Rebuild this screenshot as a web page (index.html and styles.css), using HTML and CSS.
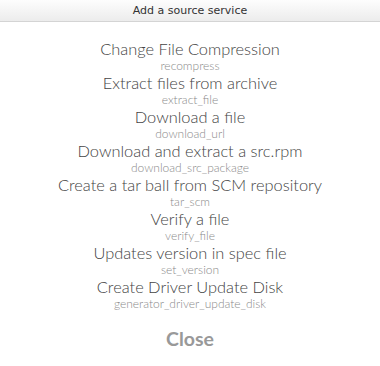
FILE: index.html
```html
<!DOCTYPE html>
<html>
<head>
<meta charset="utf-8">
<link rel="stylesheet" href="styles.css">
</head>
<body>
<div class="dialog">
  <div class="header">Add a source service</div>
  <ul class="services">
    <li><a class="title">Change File Compression</a><span class="name">recompress</span></li>
    <li><a class="title">Extract files from archive</a><span class="name">extract_file</span></li>
    <li><a class="title">Download a file</a><span class="name">download_url</span></li>
    <li><a class="title">Download and extract a src.rpm</a><span class="name">download_src_package</span></li>
    <li><a class="title">Create a tar ball from SCM repository</a><span class="name">tar_scm</span></li>
    <li><a class="title">Verify a file</a><span class="name">verify_file</span></li>
    <li><a class="title">Updates version in spec file</a><span class="name">set_version</span></li>
    <li><a class="title">Create Driver Update Disk</a><span class="name">generator_driver_update_disk</span></li>
  </ul>
  <div class="footer"><a class="close">Close</a></div>
</div>
</body>
</html>
```

FILE: styles.css
```css
html, body {
  margin: 0;
  padding: 0;
  background: #ffffff;
}
.dialog {
  width: 380px;
  height: 366px;
  box-sizing: border-box;
  font-family: "Lato", "Open Sans", sans-serif;
  background: #ffffff;
  border-radius: 0 0 4px 4px;
}
.header {
  height: 21px;
  line-height: 22px;
  border-bottom: 1px solid #d4d4d4;
  background: linear-gradient(#fdfdfd, #ececec);
  text-align: center;
  font-family: "DejaVu Sans", sans-serif;
  font-size: 11px;
  color: #333;
  letter-spacing: 0;
}
.services {
  list-style: none;
  margin: 0;
  padding: 17px 0 0;
  text-align: center;
}
.services li {
  display: flex;
  flex-direction: column;
  align-items: center;
  height: 34px;
}
.title {
  font-size: 16.4px;
  font-weight: 300;
  line-height: 19px;
  color: #444;
}
.name {
  font-size: 12px;
  font-weight: 300;
  line-height: 13px;
  margin-top: 1px;
  color: #8a8a8a;
}
.footer {
  text-align: center;
  padding-top: 16px;
}
.close {
  font-size: 19.5px;
  font-weight: bold;
  color: #999;
}
```
